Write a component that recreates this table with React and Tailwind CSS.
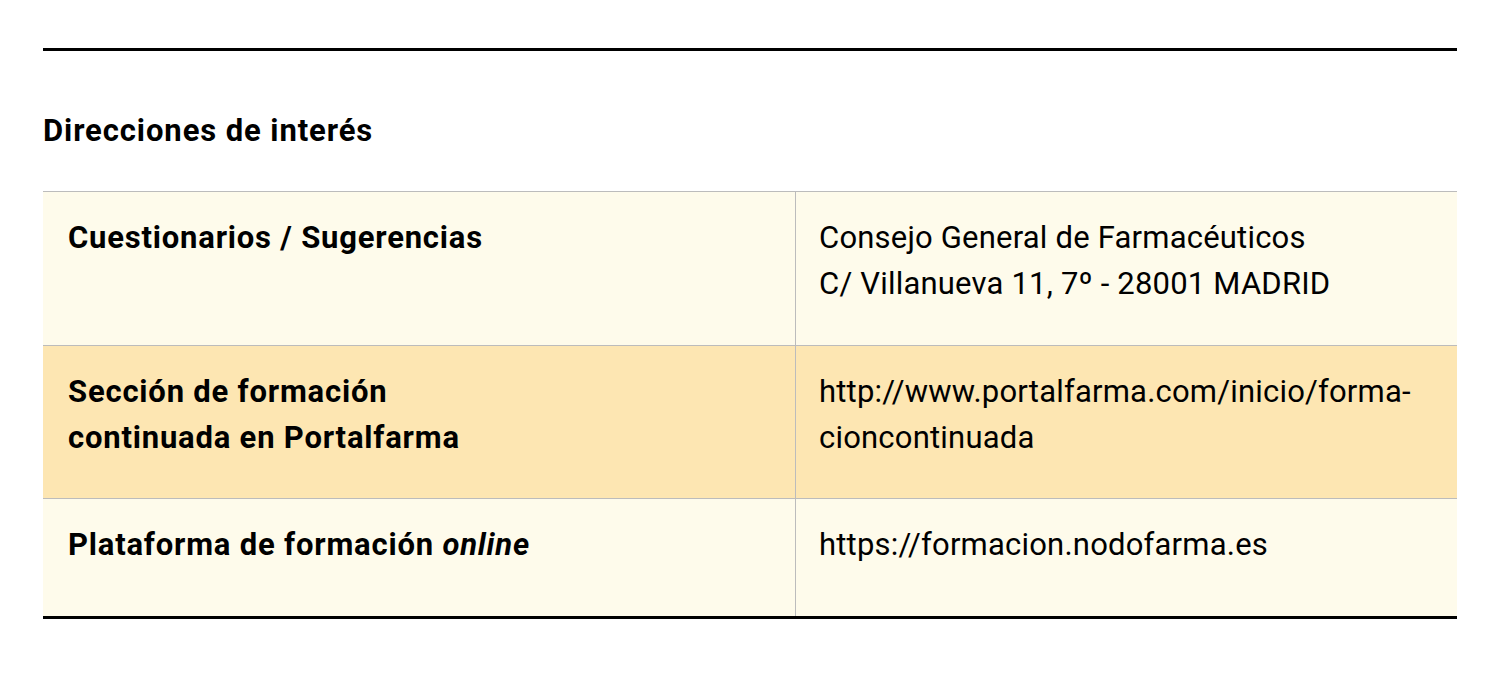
export default function App() {
  const rows = [
    {
      bg: "bg-[#fefbeb]",
      h: "h-[153px]",
      left: <>Cuestionarios / Sugerencias</>,
      right: (
        <>
          Consejo General de Farmacéuticos
          <br />
          C/ Villanueva 11, 7º - 28001 MADRID
        </>
      ),
    },
    {
      bg: "bg-[#fde6b2]",
      h: "h-[153px]",
      left: (
        <>
          Sección de formación
          <br />
          continuada en Portalfarma
        </>
      ),
      right: (
        <>
          http://www.portalfarma.com/inicio/forma-
          <br />
          cioncontinuada
        </>
      ),
    },
    {
      bg: "bg-[#fefbeb]",
      h: "h-[118px]",
      left: (
        <>
          Plataforma de formación <em>online</em>
        </>
      ),
      right: <>https://formacion.nodofarma.es</>,
    },
  ];
  return (
    <div
      className="w-[1501px] h-[674px] bg-white text-black pt-[48px] px-[43px]"
      style={{ fontFamily: "Roboto, 'Liberation Sans', sans-serif" }}
    >
      <div className="w-[1414px] border-t-[3px] border-black" />
      <h2 className="mt-[60px] text-[31px] leading-[40px] font-bold tracking-[0.9px]">
        Direcciones de interés
      </h2>
      <div className="mt-[40px] w-[1414px] border-t border-[#bcbcbc] border-b-[3px] border-b-black">
        {rows.map((r, i) => (
          <div
            key={i}
            className={`flex ${r.bg} ${r.h} ${i > 0 ? "border-t border-[#bcbcbc]" : ""}`}
          >
            <div className="w-[753px] shrink-0 border-r border-[#bcbcbc] pl-[25px] pt-[23px] text-[31px] leading-[46px] font-bold tracking-[0.8px]">
              {r.left}
            </div>
            <div className="flex-1 pl-[23px] pt-[23px] text-[31px] leading-[46px] font-normal tracking-[0.2px]">
              {r.right}
            </div>
          </div>
        ))}
      </div>
    </div>
  );
}
